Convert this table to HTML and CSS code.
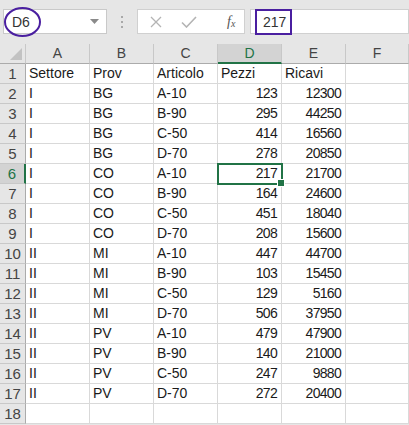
FILE: index.html
```html
<!DOCTYPE html>
<html>
<head>
<meta charset="utf-8">
<link rel="stylesheet" href="styles.css">
</head>
<body>
<div class="app">
  <div class="toolbar">
    <div class="namebox">
      <span class="nb-text">D6</span>
      <svg class="nb-arrow" width="9" height="5" viewBox="0 0 9 5"><path d="M0 0 L9 0 L4.5 5 Z" fill="#8a8a8a"/></svg>
      <svg class="circle" width="40" height="34" viewBox="0 0 40 34"><ellipse cx="19.5" cy="16" rx="17.5" ry="14" fill="none" stroke="#4a1fa0" stroke-width="2"/></svg>
    </div>
    <div class="dots"><i></i><i></i><i></i></div>
    <div class="fbuttons">
      <svg class="fb-x" width="12" height="12" viewBox="0 0 12 12"><path d="M1 1 L11 11 M11 1 L1 11" stroke="#b4b4b4" stroke-width="1.3" fill="none"/></svg>
      <svg class="fb-ok" width="16" height="12" viewBox="0 0 16 12"><path d="M1 6.5 L5.5 11 L15 1" stroke="#b4b4b4" stroke-width="1.6" fill="none"/></svg>
      <span class="fx">f<sub>x</sub></span>
    </div>
    <div class="finput"><span class="fval">217</span></div>
  </div>
  <div class="sheet">
    <div class="ch corner"><svg width="12" height="12" viewBox="0 0 12 12"><path d="M12 0 L12 12 L0 12 Z" fill="#c2c2c2"/></svg></div>
    <div class="ch">A</div><div class="ch">B</div><div class="ch">C</div><div class="ch sel">D</div><div class="ch">E</div><div class="ch">F</div>

    <div class="rh">1</div><div class="c">Settore</div><div class="c">Prov</div><div class="c">Articolo</div><div class="c">Pezzi</div><div class="c">Ricavi</div><div class="c"></div>
    <div class="rh">2</div><div class="c">I</div><div class="c">BG</div><div class="c">A-10</div><div class="c n">123</div><div class="c n">12300</div><div class="c"></div>
    <div class="rh">3</div><div class="c">I</div><div class="c">BG</div><div class="c">B-90</div><div class="c n">295</div><div class="c n">44250</div><div class="c"></div>
    <div class="rh">4</div><div class="c">I</div><div class="c">BG</div><div class="c">C-50</div><div class="c n">414</div><div class="c n">16560</div><div class="c"></div>
    <div class="rh">5</div><div class="c">I</div><div class="c">BG</div><div class="c">D-70</div><div class="c n">278</div><div class="c n">20850</div><div class="c"></div>
    <div class="rh sel">6</div><div class="c">I</div><div class="c">CO</div><div class="c">A-10</div><div class="c n active">217</div><div class="c n">21700</div><div class="c"></div>
    <div class="rh">7</div><div class="c">I</div><div class="c">CO</div><div class="c">B-90</div><div class="c n">164</div><div class="c n">24600</div><div class="c"></div>
    <div class="rh">8</div><div class="c">I</div><div class="c">CO</div><div class="c">C-50</div><div class="c n">451</div><div class="c n">18040</div><div class="c"></div>
    <div class="rh">9</div><div class="c">I</div><div class="c">CO</div><div class="c">D-70</div><div class="c n">208</div><div class="c n">15600</div><div class="c"></div>
    <div class="rh">10</div><div class="c">II</div><div class="c">MI</div><div class="c">A-10</div><div class="c n">447</div><div class="c n">44700</div><div class="c"></div>
    <div class="rh">11</div><div class="c">II</div><div class="c">MI</div><div class="c">B-90</div><div class="c n">103</div><div class="c n">15450</div><div class="c"></div>
    <div class="rh">12</div><div class="c">II</div><div class="c">MI</div><div class="c">C-50</div><div class="c n">129</div><div class="c n">5160</div><div class="c"></div>
    <div class="rh">13</div><div class="c">II</div><div class="c">MI</div><div class="c">D-70</div><div class="c n">506</div><div class="c n">37950</div><div class="c"></div>
    <div class="rh">14</div><div class="c">II</div><div class="c">PV</div><div class="c">A-10</div><div class="c n">479</div><div class="c n">47900</div><div class="c"></div>
    <div class="rh">15</div><div class="c">II</div><div class="c">PV</div><div class="c">B-90</div><div class="c n">140</div><div class="c n">21000</div><div class="c"></div>
    <div class="rh">16</div><div class="c">II</div><div class="c">PV</div><div class="c">C-50</div><div class="c n">247</div><div class="c n">9880</div><div class="c"></div>
    <div class="rh">17</div><div class="c">II</div><div class="c">PV</div><div class="c">D-70</div><div class="c n">272</div><div class="c n">20400</div><div class="c"></div>
    <div class="rh">18</div><div class="c"></div><div class="c"></div><div class="c"></div><div class="c"></div><div class="c"></div><div class="c"></div>
  </div>
</div>
</body>
</html>
```
FILE: styles.css
```css
* { box-sizing: border-box; }
html, body { margin: 0; padding: 0; }
body {
  width: 409px;
  height: 425px;
  overflow: hidden;
  background: #e6e6e6;
  font-family: "Liberation Sans", Arial, sans-serif;
  font-size: 14px;
  color: #222;
}
.toolbar {
  height: 44px;
  display: flex;
  align-items: flex-start;
  padding: 9px 0 0 3px;
  background: #e6e6e6;
}
.namebox {
  position: relative;
  width: 104px;
  height: 25px;
  background: #fff;
  border: 1px solid #c9c9c9;
  display: flex;
  align-items: center;
  padding-left: 8px;
}
.nb-text { color: #333; font-size: 14px; flex: 1; }
.nb-arrow { margin-right: 7px; }
.circle {
  position: absolute;
  left: -1px;
  top: -4px;
}
.dots {
  width: 30px;
  height: 25px;
  display: flex;
  flex-direction: column;
  align-items: center;
  justify-content: center;
  gap: 3px;
}
.dots i {
  display: block;
  width: 2px;
  height: 2px;
  background: #a8a8a8;
}
.fbuttons {
  width: 108px;
  height: 25px;
  background: #fff;
  border: 1px solid #d0d0d0;
  display: flex;
  align-items: center;
  padding-left: 12px;
}
.fb-x { margin-right: 19px; }
.fb-ok { margin-right: 30px; }
.fx {
  font-family: "Liberation Serif", serif;
  font-style: italic;
  color: #555;
  font-size: 14px;
}
.fx sub { font-size: 10px; vertical-align: -1px; }
.finput {
  margin-left: 5px;
  flex: 1;
  height: 25px;
  background: #fff;
  border: 1px solid #d0d0d0;
  position: relative;
}
.fval {
  position: absolute;
  left: 4px;
  top: -1px;
  width: 37px;
  height: 26px;
  border: 2px solid #4a1fa0;
  padding-left: 6px;
  line-height: 22px;
  color: #333;
}
.sheet {
  display: grid;
  grid-template-columns: 26px repeat(5, 64px) 1fr;
  grid-auto-rows: 20px;
  background: #fff;
}
.ch {
  background: #e6e6e6;
  border-right: 1px solid #c8c8c8;
  border-bottom: 1px solid #ababab;
  text-align: center;
  line-height: 19px;
  color: #444;
}
.ch.corner {
  display: flex;
  align-items: flex-end;
  justify-content: flex-end;
  padding: 0 3px 3px 0;
}
.ch.sel {
  background: #d3d3d3;
  color: #217346;
  border-bottom: 2px solid #217346;
}
.rh {
  background: #e6e6e6;
  border-right: 1px solid #ababab;
  border-bottom: 1px solid #c8c8c8;
  text-align: center;
  line-height: 19px;
  color: #444;
  font-size: 15px;
}
.rh.sel {
  background: #d3d3d3;
  color: #217346;
  border-right: 2px solid #217346;
}
.c {
  border-right: 1px solid #d9d9d9;
  border-bottom: 1px solid #d9d9d9;
  line-height: 19px;
  padding: 0 3px;
  white-space: nowrap;
  overflow: visible;
  color: #1a1a1a;
}
.c.n { text-align: right; letter-spacing: -0.7px; padding-right: 4px; }
.c.active {
  position: relative;
  outline: 2px solid #217346;
  outline-offset: -1px;
  z-index: 2;
}
.c.active::after {
  content: "";
  position: absolute;
  right: -4px;
  bottom: -4px;
  width: 6px;
  height: 6px;
  background: #217346;
  border: 1px solid #fff;
}
```
